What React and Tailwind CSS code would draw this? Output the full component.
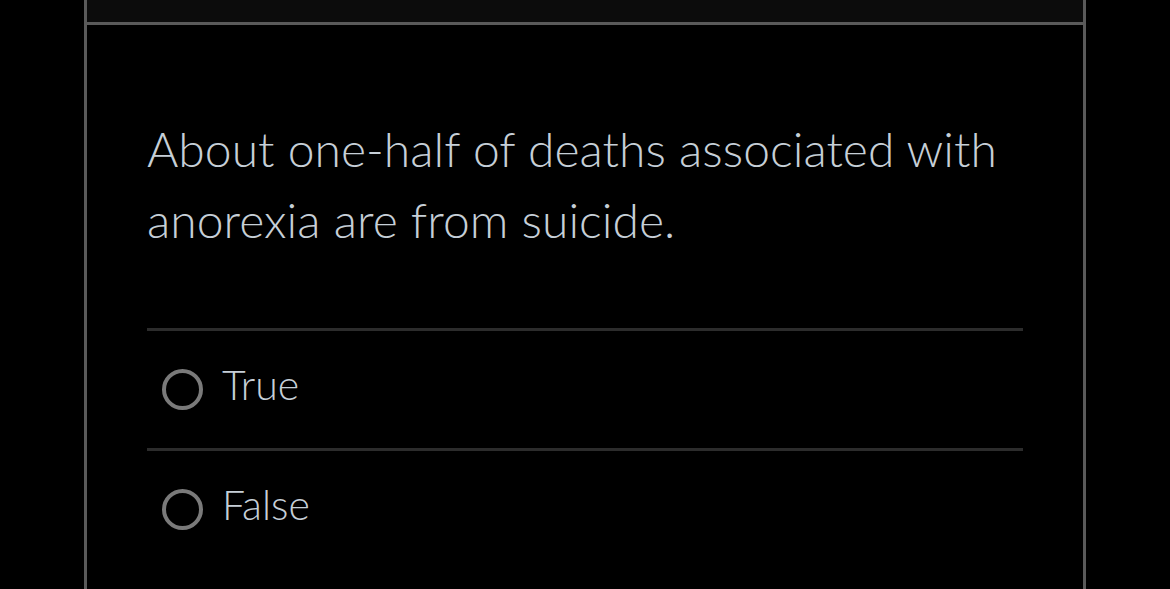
export default function App() {
  const opts = ["True", "False"];
  return (
    <div className="w-[1170px] h-[589px] bg-black overflow-hidden" style={{ fontFamily: "Lato, 'Noto Sans', sans-serif" }}>
      <div className="ml-[84px] w-[1002px] h-full border-x-[3px] border-[#5a5a5a] flex flex-col">
        <div className="h-[25px] bg-[#0c0c0c] border-b-[3px] border-[#5a5a5a]"></div>
        <div className="px-[60px] pt-[88px]">
          <p className="text-[48px] leading-[71px] font-light text-[#c6cfd7] tracking-[0.05px]">
            About one-half of deaths associated with anorexia are from suicide.
          </p>
          <div className="mt-[73px]">
            {opts.map((o) => (
              <div key={o} className="border-t-[3px] border-[#2c2c2c] h-[120px] flex items-center pl-[15px]">
                <span className="w-[41px] h-[41px] rounded-full border-[4px] border-[#7a7a7a]"></span>
                <span className="ml-[19px] text-[41px] font-light text-[#c6cfd7] -mt-[10px]">{o}</span>
              </div>
            ))}
          </div>
        </div>
      </div>
    </div>
  );
}
